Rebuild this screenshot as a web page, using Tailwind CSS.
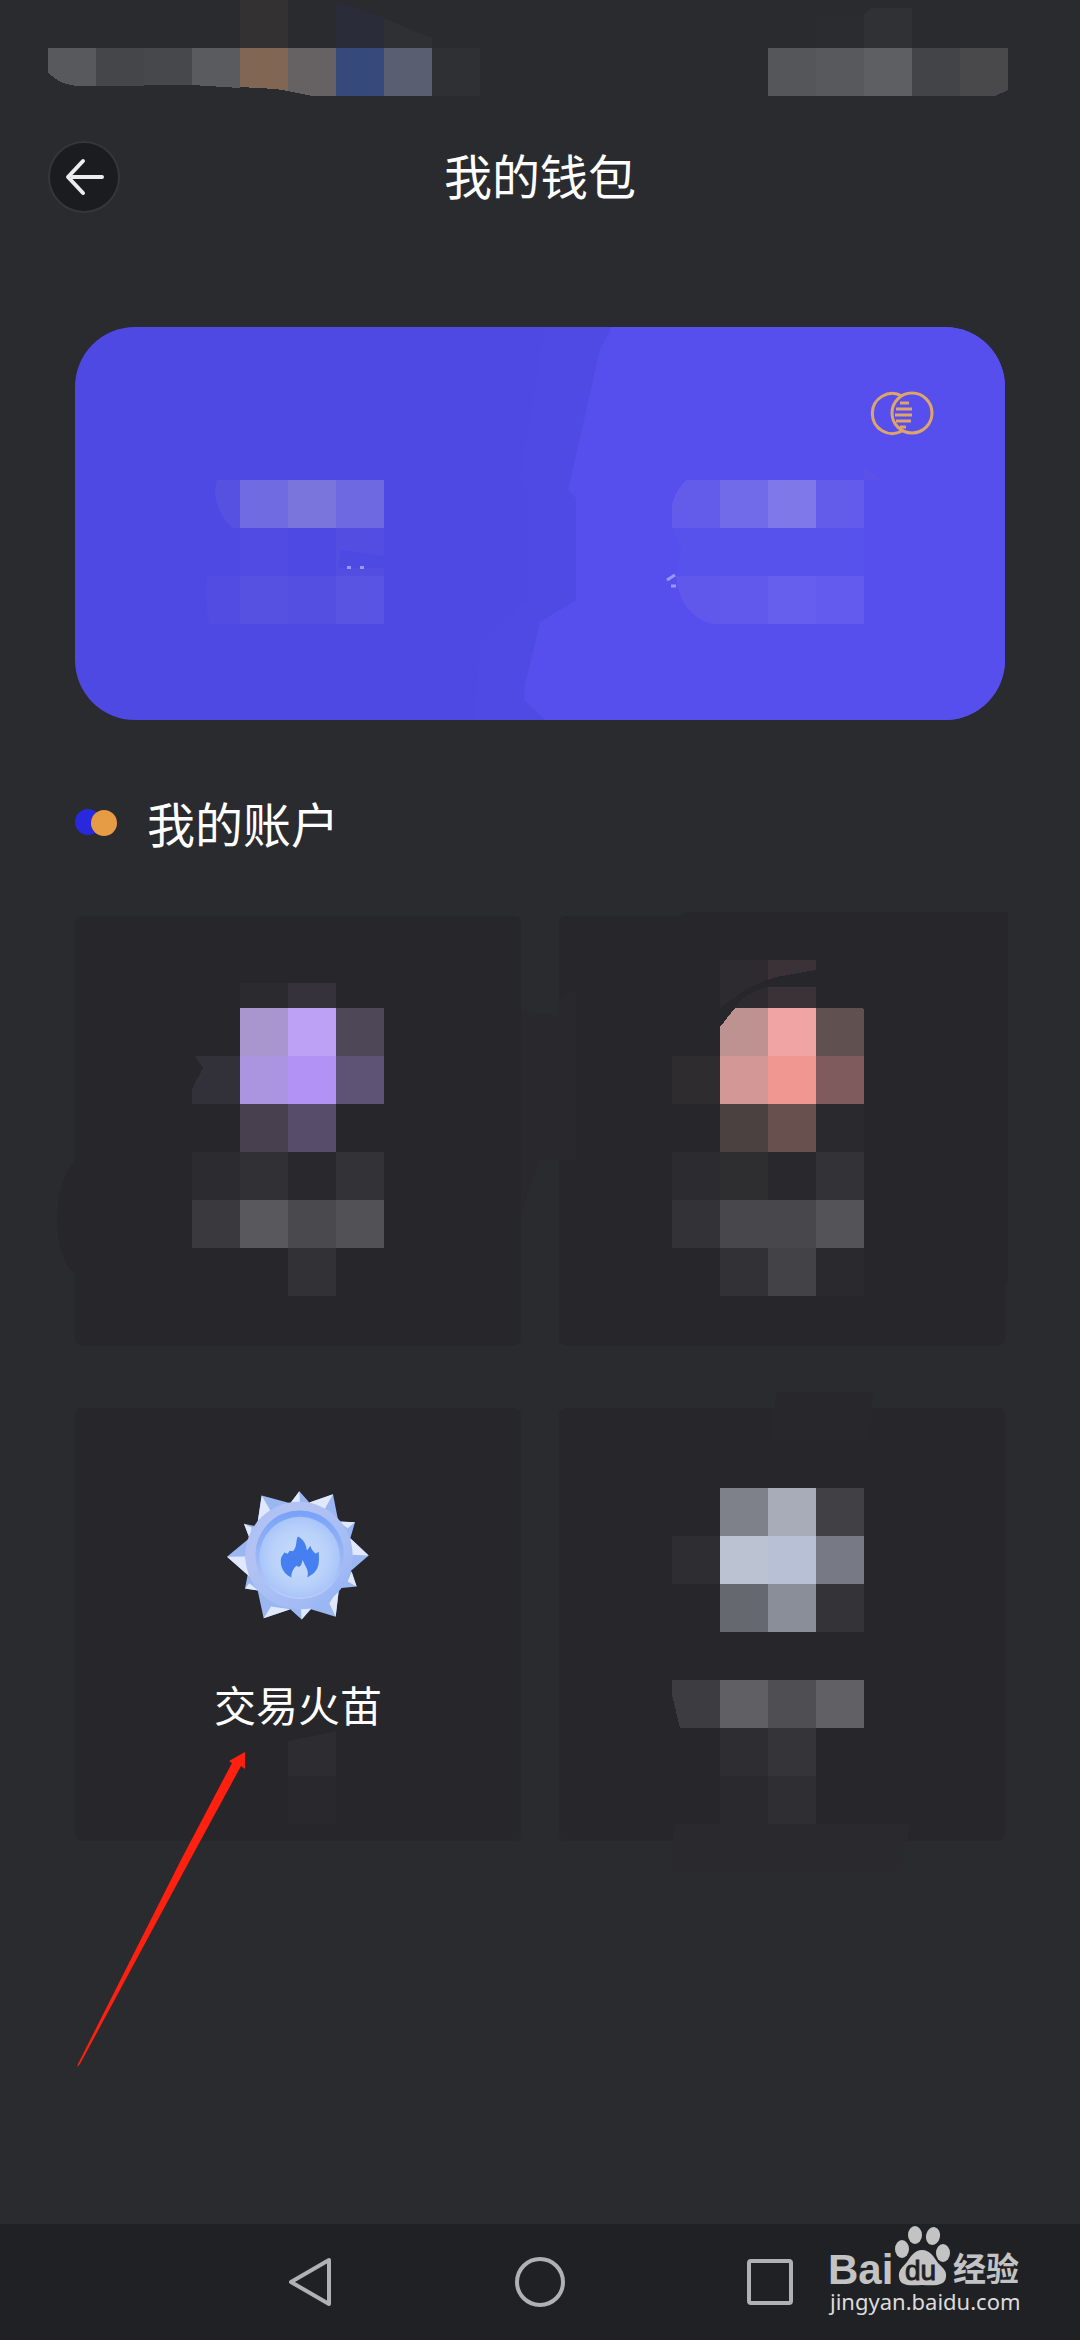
<!DOCTYPE html>
<html lang="zh-CN">
<head>
<meta charset="utf-8">
<meta name="viewport" content="width=device-width, initial-scale=1">
<title>我的钱包</title>
<script src="https://cdn.jsdelivr.net/npm/@tailwindcss/browser@4"></script>
</head>
<body class="bg-[#2a2b2f] text-white font-['Noto_Sans_CJK_SC',sans-serif]">
<div class="flex min-h-screen flex-col overflow-hidden">

  <!-- Status bar, pixelated -->
  <svg class="block w-full" viewBox="0 0 1080 96" shape-rendering="crispEdges" aria-hidden="true">
    <rect x="240" width="48" height="48" fill="#343133"/>
    <path d="M336 2 384 18V48H336Z" fill="#2b2c39"/>
    <path d="M384 18 420 34 432 38V48H384Z" fill="#2e3034"/>
    <path d="M48 48H96V86H82Q60 86 48 72Z" fill="#58595c"/>
    <rect x="96" y="48" width="48" height="38" fill="#454649"/>
    <rect x="144" y="48" width="48" height="37" fill="#47484b"/>
    <path d="M192 48H240V88L192 85Z" fill="#5a5b5e"/>
    <path d="M240 48H288V91L276 89 240 87Z" fill="#826654"/>
    <path d="M288 48H336V96H312L288 91Z" fill="#666263"/>
    <rect x="336" y="48" width="48" height="48" fill="#36497b"/>
    <rect x="384" y="48" width="48" height="48" fill="#595e71"/>
    <rect x="432" y="48" width="48" height="48" fill="#2e3033"/>
    <path d="M864 14 872 8H912V48H864Z" fill="#303135"/>
    <rect x="816" y="17" width="48" height="31" fill="#2b2c30"/>
    <rect x="768" y="48" width="48" height="48" fill="#555659"/>
    <rect x="816" y="48" width="48" height="48" fill="#58595c"/>
    <rect x="864" y="48" width="48" height="48" fill="#5e5f62"/>
    <rect x="912" y="48" width="48" height="48" fill="#434447"/>
    <path d="M960 48H1008V90L995 96H960Z" fill="#49494c"/>
  </svg>

  <header class="grid grid-cols-[72px_1fr_72px] items-start px-12 pt-[45px]">
    <button type="button" aria-label="返回" class="flex size-[72px] items-center justify-center rounded-full border-2 border-[#35363a] bg-[#1b1c1f]">
      <svg class="h-10 w-10" viewBox="0 0 40 40" fill="none" stroke="#ededf0" stroke-width="4" stroke-linecap="round" stroke-linejoin="round" aria-hidden="true"><path d="M19 4 4 20 19 36M9 20H38"/></svg>
    </button>
    <h1 class="text-center text-[48px] leading-[66px] font-normal">我的钱包</h1>
  </header>

  <main class="flex flex-1 flex-col px-[75px] pt-[114px]">
    <section aria-label="余额" class="overflow-hidden rounded-[60px] bg-[#4f49e3]">
      <svg class="block w-full" viewBox="75 327 930 393" aria-hidden="true">
        <path d="M545 327H620V720H475L480 640 528 600V495L520 480Z" fill="#504ae5"/>
        <path d="M612 327 600 350 568 490 576 498V600L540 622 525 685 524 700 545 720H1005V327Z" fill="#564fee"/>
        <g fill="none" stroke="#dfa568" stroke-width="3">
          <path d="M902 396A20 20 0 1 0 902 431"/><circle cx="912" cy="413" r="20"/>
          <path d="M900 403H909M896 409H912M895 415H912M896 421H911M900 427H906"/>
        </g>
        <g shape-rendering="crispEdges">
          <path d="M217 480H240V528H232Q210 505 217 480Z" fill="#5751e1"/>
          <rect x="240" y="480" width="48" height="48" fill="#706be1"/>
          <rect x="288" y="480" width="48" height="48" fill="#7a75dd"/>
          <rect x="336" y="480" width="48" height="48" fill="#6e69e0"/>
          <rect x="240" y="528" width="48" height="48" fill="#514be4"/>
          <path d="M336 528H384V556L341 550 338 568H384V576H336Z" fill="#534de2"/>
          <path d="M207 576H240V624H209Q205 600 207 576Z" fill="#524ce3"/>
          <rect x="240" y="576" width="48" height="48" fill="#5751e2"/>
          <rect x="288" y="576" width="48" height="48" fill="#554fe1"/>
          <rect x="336" y="576" width="48" height="48" fill="#5a54e2"/>
          <path d="M347 566h4v3h-4zM360 566h4v3h-4z" fill="#9b97f8"/>
          <path d="M686 480H720V528H672V505Q675 492 686 480Z" fill="#635ceb"/>
          <rect x="720" y="480" width="48" height="48" fill="#716be9"/>
          <rect x="768" y="480" width="48" height="48" fill="#7e78e9"/>
          <rect x="816" y="480" width="48" height="48" fill="#635ceb"/>
          <path d="M672 528H864V576H676L682 548Z" fill="#5852ec"/>
          <path d="M676 576H720V624H712Q680 615 676 576Z" fill="#6058ea"/>
          <rect x="720" y="576" width="48" height="48" fill="#6159ec"/>
          <rect x="768" y="576" width="48" height="48" fill="#665eed"/>
          <rect x="816" y="576" width="48" height="48" fill="#635bed"/>
          <path d="M864 480V468L882 480Z" fill="#5a52e8"/>
        </g>
        <path d="M667 580 675 575M671 586H676" fill="none" stroke="#9b97fa" stroke-width="3"/>
      </svg>
    </section>

    <div class="mt-[67px] flex items-center gap-[30px]">
      <svg class="h-7 w-[42px]" viewBox="0 0 42 28" aria-hidden="true"><circle cx="13" cy="14" r="13" fill="#2829dc"/><circle cx="29" cy="15" r="13" fill="#e69c45"/></svg>
      <h2 class="text-[48px] leading-[70px] font-normal">我的账户</h2>
    </div>

    <div class="mt-[59px] grid grid-cols-2 gap-x-[38px] gap-y-[62px]">
      <button type="button" aria-label="账户一" class="rounded-lg bg-[#27262b]">
        <svg class="block w-full overflow-visible" viewBox="75 916 446 430" shape-rendering="crispEdges" aria-hidden="true">
          <path d="M95 1142Q57 1165 57 1220T95 1286Z" fill="#27262b"/>
          <path d="M521 1010 540 1015H576V1160H540L521 1214Z" fill="#29282c"/>
          <rect x="240" y="983" width="48" height="25" fill="#2b2a2f"/>
          <rect x="288" y="983" width="48" height="25" fill="#35323b"/>
          <rect x="240" y="1008" width="48" height="48" fill="#a996ce"/>
          <rect x="288" y="1008" width="48" height="48" fill="#bca1f4"/>
          <rect x="336" y="1008" width="48" height="48" fill="#4e4757"/>
          <path d="M195 1056H240V1104H192V1089L203 1068Z" fill="#323038"/>
          <rect x="240" y="1056" width="48" height="48" fill="#ac95e0"/>
          <rect x="288" y="1056" width="48" height="48" fill="#b292f4"/>
          <rect x="336" y="1056" width="48" height="48" fill="#5e5375"/>
          <rect x="240" y="1104" width="48" height="48" fill="#48404e"/>
          <rect x="288" y="1104" width="48" height="48" fill="#574c69"/>
          <rect x="192" y="1152" width="48" height="48" fill="#2c2b30"/>
          <rect x="240" y="1152" width="48" height="48" fill="#313034"/>
          <rect x="288" y="1152" width="48" height="48" fill="#29282c"/>
          <rect x="336" y="1152" width="48" height="48" fill="#333236"/>
          <rect x="192" y="1200" width="48" height="48" fill="#3a393e"/>
          <rect x="240" y="1200" width="48" height="48" fill="#59585c"/>
          <rect x="288" y="1200" width="48" height="48" fill="#4a494d"/>
          <rect x="336" y="1200" width="48" height="48" fill="#525155"/>
          <rect x="288" y="1248" width="48" height="48" fill="#323135"/>
        </svg>
      </button>

      <button type="button" aria-label="账户二" class="rounded-lg bg-[#27262b]">
        <svg class="block w-full overflow-visible" viewBox="559 916 446 430" shape-rendering="crispEdges" aria-hidden="true">
          <path d="M673 922 686 912H1008V1284H990V930Z" fill="#27262b"/>
          <path d="M559 1000 576 990V1160H559Z" fill="#29282c"/>
          <path d="M720 960H768V979L745 990 720 1008Z" fill="#2d2b2f"/>
          <path d="M768 960H816V970L776 977 768 980Z" fill="#3a3236"/>
          <path d="M735 1008Q745 992 768 987V1008Z" fill="#2d2b2f"/>
          <rect x="768" y="987" width="48" height="21" fill="#3a3236"/>
          <path d="M735 1008H768V1056H720V1027Z" fill="#bd9290"/>
          <rect x="768" y="1008" width="48" height="48" fill="#f0a4a4"/>
          <path d="M816 1008H862L864 1010V1056H816Z" fill="#605150"/>
          <rect x="672" y="1056" width="48" height="48" fill="#2f2c30"/>
          <rect x="720" y="1056" width="48" height="48" fill="#d39895"/>
          <rect x="768" y="1056" width="48" height="48" fill="#f09791"/>
          <rect x="816" y="1056" width="48" height="48" fill="#805b5d"/>
          <rect x="720" y="1104" width="48" height="48" fill="#4b4140"/>
          <rect x="768" y="1104" width="48" height="48" fill="#68504e"/>
          <rect x="816" y="1104" width="48" height="48" fill="#2a292d"/>
          <rect x="672" y="1152" width="48" height="48" fill="#2c2b2f"/>
          <rect x="720" y="1152" width="48" height="48" fill="#2e2d30"/>
          <rect x="768" y="1152" width="48" height="48" fill="#29282c"/>
          <rect x="816" y="1152" width="48" height="48" fill="#333236"/>
          <rect x="672" y="1200" width="48" height="48" fill="#333236"/>
          <rect x="720" y="1200" width="96" height="48" fill="#48474b"/>
          <rect x="816" y="1200" width="48" height="48" fill="#545357"/>
          <rect x="720" y="1248" width="48" height="48" fill="#323135"/>
          <rect x="768" y="1248" width="48" height="48" fill="#434246"/>
          <rect x="816" y="1248" width="48" height="48" fill="#2a292d"/>
        </svg>
      </button>

      <button type="button" class="relative flex flex-col items-center rounded-lg bg-[#27262b] pt-[83px]">
        <svg class="h-[129px] w-[142px]" viewBox="78 94 426 386" aria-hidden="true">
          <defs>
            <linearGradient id="ring" x1="0" y1="0" x2="1" y2="1"><stop offset="0" stop-color="#a9c0f6"/><stop offset=".3" stop-color="#b4c2f2"/><stop offset=".5" stop-color="#a9bff5"/><stop offset=".75" stop-color="#a3bbf4"/><stop offset="1" stop-color="#87adf8"/></linearGradient>
            <linearGradient id="rim" x1="0" y1="0" x2="0" y2="1"><stop offset="0" stop-color="#77a2f8"/><stop offset=".5" stop-color="#98b5f5"/><stop offset="1" stop-color="#b9cdf8"/></linearGradient>
            <radialGradient id="disc"><stop offset="0" stop-color="#c9dcfa"/><stop offset=".7" stop-color="#b9d1fa"/><stop offset="1" stop-color="#a9c5f9"/></radialGradient>
          </defs>
          <path fill="#9ab7f2" d="M182 107 168 200 129 192 145 235 78 291 140 345 132 386 170 392 188 475 268 448 302 479 330 448 404 471 414 385 467 380 450 333 503 287 448 235 462 187 412 185 396 103 325 128 295 94 268 130Z"/>
          <path fill="#dfe8fc" d="M182 107 168 200 210 155ZM129 192 152 203 147 238ZM78 291 132 290 145 350ZM132 386 145 370 172 392ZM188 475 210 440 268 448ZM302 479 300 448 330 446ZM404 471 385 430 414 385ZM467 380 440 365 452 335ZM503 287 450 285 448 235ZM462 187 440 205 412 185ZM396 103 370 150 325 128ZM295 94 297 130 268 130Z"/>
          <circle cx="294" cy="287" r="161" fill="url(#ring)"/>
          <circle cx="296" cy="285" r="133" fill="url(#rim)"/>
          <circle cx="296" cy="292" r="121" fill="url(#disc)"/>
          <path fill="#467ff0" d="M290 230C312 240 315 258 318 272L328 258C332 274 342 278 344 282L353 276C356 315 354 335 319 353C326 330 312 322 305 300C300 322 296 324 286 318C276 328 270 340 271 353C241 338 236 310 241 292L250 278L260 282L266 273L276 274C288 262 284 246 290 230Z"/>
        </svg>
        <span class="mt-[54px] text-[42px] leading-[60px]">交易火苗</span>
        <!-- Pointer arrow lying over the page -->
        <svg class="pointer-events-none absolute inset-0 h-full w-full overflow-visible" viewBox="75 1408 446 433" aria-hidden="true">
          <path d="M288 1741 336 1731V1776H288Z" fill="#2d2c30"/>
          <rect x="288" y="1776" width="48" height="48" fill="#29282c"/>
          <path d="M245 1752 229 1761 232 1763 182 1858 78 2064 77 2067 80 2064 190 1860 241 1766 245 1769Z" fill="#ff2010"/>
        </svg>
      </button>

      <button type="button" aria-label="账户四" class="rounded-lg bg-[#27262b]">
        <svg class="block w-full overflow-visible" viewBox="559 1408 446 433" shape-rendering="crispEdges" aria-hidden="true">
          <path d="M776 1392H873L869 1440H772Z" fill="#28272b"/>
          <path d="M674 1824H910L902 1872H672Z" fill="#2a292d"/>
          <rect x="720" y="1488" width="48" height="48" fill="#7e8189"/>
          <rect x="768" y="1488" width="48" height="48" fill="#a8acb8"/>
          <rect x="816" y="1488" width="48" height="48" fill="#414045"/>
          <rect x="672" y="1536" width="48" height="48" fill="#2e2d31"/>
          <rect x="720" y="1536" width="48" height="48" fill="#bbc2d1"/>
          <rect x="768" y="1536" width="48" height="48" fill="#b7c0d5"/>
          <rect x="816" y="1536" width="48" height="48" fill="#777984"/>
          <rect x="720" y="1584" width="48" height="48" fill="#65686f"/>
          <rect x="768" y="1584" width="48" height="48" fill="#898e98"/>
          <rect x="816" y="1584" width="48" height="48" fill="#343338"/>
          <path d="M672 1680H720V1728H680L672 1695Z" fill="#3d3c40"/>
          <rect x="720" y="1680" width="48" height="48" fill="#605f63"/>
          <rect x="768" y="1680" width="48" height="48" fill="#4f4e52"/>
          <rect x="816" y="1680" width="48" height="48" fill="#616064"/>
          <rect x="720" y="1728" width="48" height="48" fill="#2e2d31"/>
          <rect x="768" y="1728" width="48" height="48" fill="#353438"/>
          <rect x="720" y="1776" width="48" height="48" fill="#2a292d"/>
          <rect x="768" y="1776" width="48" height="48" fill="#2f2e32"/>
        </svg>
      </button>
    </div>
  </main>

  <nav aria-label="系统导航" class="relative grid h-[116px] grid-cols-[195px_1fr_1fr_1fr_195px] items-center bg-[#202124] text-[#b0b1b5]">
    <button type="button" aria-label="后退" class="col-start-2 flex justify-center"><svg class="h-[50px] w-[44px]" viewBox="0 0 44 50" fill="none" stroke="currentColor" stroke-width="4" stroke-linejoin="round" aria-hidden="true"><path d="M41 3V47L3 25Z"/></svg></button>
    <button type="button" aria-label="主页" class="flex justify-center"><span class="size-[50px] rounded-full border-4 border-current"></span></button>
    <button type="button" aria-label="最近任务" class="flex justify-center"><span class="size-[46px] rounded-sm border-4 border-current"></span></button>
    <a href="#" aria-label="百度经验" class="absolute right-10 bottom-0 h-[116px] w-[220px]">
      <svg class="h-full w-full" viewBox="820 2224 220 116" fill="#c3c3c3" aria-hidden="true">
        <text x="828" y="2284" font-family="Liberation Sans, sans-serif" font-weight="700" font-size="42">Bai</text>
        <ellipse cx="902" cy="2249" rx="7" ry="9"/><ellipse cx="915" cy="2235" rx="7" ry="9"/><ellipse cx="933" cy="2236" rx="7" ry="9" transform="rotate(12 933 2236)"/><ellipse cx="943" cy="2253" rx="7" ry="9"/>
        <path d="M922 2250C930 2250 934 2257 938 2263C943 2268 947 2271 946 2277C945 2285 938 2286 922 2285C906 2286 900 2285 899 2277C898 2270 903 2267 907 2262C911 2256 915 2250 922 2250Z"/>
        <text x="905" y="2280" font-family="Liberation Sans, sans-serif" font-size="28" fill="#202124" stroke="#202124">du</text>
        <text x="953" y="2281" font-family="Noto Sans CJK SC, sans-serif" font-weight="700" font-size="33">经验</text>
        <text x="830" y="2310" font-family="Noto Sans, sans-serif" font-size="22" fill="#dcdcdc">jingyan.baidu.com</text>
      </svg>
    </a>
  </nav>
</div>
</body>
</html>
